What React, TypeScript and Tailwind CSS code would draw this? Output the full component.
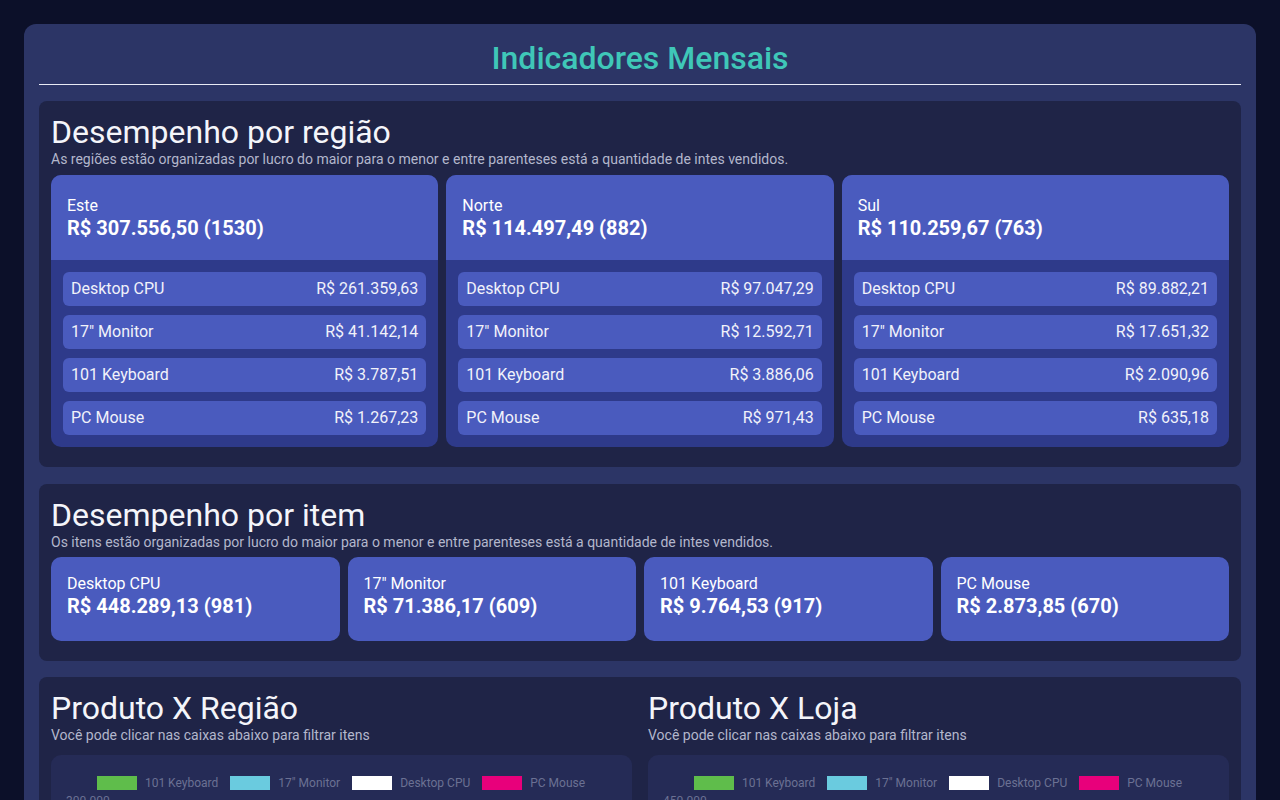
const regions = [
  {
    name: "Este",
    total: "R$ 307.556,50 (1530)",
    items: [
      ["Desktop CPU", "R$ 261.359,63"],
      ['17" Monitor', "R$ 41.142,14"],
      ["101 Keyboard", "R$ 3.787,51"],
      ["PC Mouse", "R$ 1.267,23"],
    ],
  },
  {
    name: "Norte",
    total: "R$ 114.497,49 (882)",
    items: [
      ["Desktop CPU", "R$ 97.047,29"],
      ['17" Monitor', "R$ 12.592,71"],
      ["101 Keyboard", "R$ 3.886,06"],
      ["PC Mouse", "R$ 971,43"],
    ],
  },
  {
    name: "Sul",
    total: "R$ 110.259,67 (763)",
    items: [
      ["Desktop CPU", "R$ 89.882,21"],
      ['17" Monitor', "R$ 17.651,32"],
      ["101 Keyboard", "R$ 2.090,96"],
      ["PC Mouse", "R$ 635,18"],
    ],
  },
];

const items = [
  { name: "Desktop CPU", total: "R$ 448.289,13 (981)" },
  { name: '17" Monitor', total: "R$ 71.386,17 (609)" },
  { name: "101 Keyboard", total: "R$ 9.764,53 (917)" },
  { name: "PC Mouse", total: "R$ 2.873,85 (670)" },
];

const legend = [
  { label: "101 Keyboard", color: "bg-[#5fbd4b]" },
  { label: '17" Monitor', color: "bg-[#6acbdf]" },
  { label: "Desktop CPU", color: "bg-white" },
  { label: "PC Mouse", color: "bg-[#e8007b]" },
];

function SectionHeading({ title, subtitle }: { title: string; subtitle: string }) {
  return (
    <div>
      <h2 className="text-[32px] leading-[38px] font-normal text-[#f4f5fa]">{title}</h2>
      <p className="text-[14px] leading-4 text-[#b3b7cc]">{subtitle}</p>
    </div>
  );
}

function ChartBox({ ticks }: { ticks: string[] }) {
  return (
    <div className="rounded-[10px] bg-[#252b56] pr-4 pl-[15px] pt-[21px] pb-4">
      <div className="flex items-center justify-center gap-3 text-[12px] leading-[14px] text-[#6b7193]">
        {legend.map((l) => (
          <div key={l.label} className="flex items-center gap-2">
            <span className={`h-[14px] w-[40px] ${l.color}`} />
            <span>{l.label}</span>
          </div>
        ))}
      </div>
      <div className="mt-1 flex flex-col">
        {ticks.map((t) => (
          <div key={t} className="flex h-[48px] items-start gap-2">
            <span className="w-[42px] text-right text-[12px] leading-[14px] text-[#6b7193]">{t}</span>
            <span className="mt-[7px] h-px flex-1 bg-[#343b68]" />
          </div>
        ))}
      </div>
    </div>
  );
}

export default function App() {
  return (
    <div className="min-h-screen bg-[#0c1029] px-6 pt-6 pb-6 font-['Roboto',sans-serif]">
      <div className="rounded-xl bg-[#2c3566] px-[15px] pt-[14px] pb-4">
        <h1 className="text-center text-[32px] leading-10 font-medium text-[#3fc7b8]">Indicadores Mensais</h1>
        <div className="mt-[6px] h-px bg-[#e8eaf4]" />

        <section className="mt-4 rounded-lg bg-[#1f2447] px-3 pt-3 pb-5">
          <SectionHeading
            title="Desempenho por região"
            subtitle="As regiões estão organizadas por lucro do maior para o menor e entre parenteses está a quantidade de intes vendidos."
          />
          <div className="mt-2 grid grid-cols-3 gap-2">
            {regions.map((r) => (
              <div key={r.name} className="overflow-hidden rounded-[10px] bg-[#2e3a8a]">
                <div className="bg-[#4a5bbe] px-4 pt-[21px] pb-5 text-white">
                  <div className="text-[16px] leading-5">{r.name}</div>
                  <div className="text-[20px] leading-6 font-bold">{r.total}</div>
                </div>
                <div className="flex flex-col gap-[9px] px-3 pt-3 pb-3">
                  {r.items.map(([n, v]) => (
                    <div
                      key={n}
                      className="flex h-[34px] items-center justify-between rounded-md bg-[#4a5bbe] px-2 text-[16px] text-[#f1f2fa]"
                    >
                      <span>{n}</span>
                      <span>{v}</span>
                    </div>
                  ))}
                </div>
              </div>
            ))}
          </div>
        </section>

        <section className="mt-[17px] rounded-lg bg-[#1f2447] px-3 pt-3 pb-5">
          <SectionHeading
            title="Desempenho por item"
            subtitle="Os itens estão organizadas por lucro do maior para o menor e entre parenteses está a quantidade de intes vendidos."
          />
          <div className="mt-[7px] grid grid-cols-4 gap-2">
            {items.map((i) => (
              <div key={i.name} className="h-[84px] rounded-[10px] bg-[#4a5bbe] px-4 pt-[17px] text-white">
                <div className="text-[16px] leading-5">{i.name}</div>
                <div className="text-[20px] leading-6 font-bold">{i.total}</div>
              </div>
            ))}
          </div>
        </section>

        <section className="mt-4 grid grid-cols-2 gap-4 rounded-lg bg-[#1f2447] px-3 pt-3 pb-5">
          <div>
            <SectionHeading title="Produto X Região" subtitle="Você pode clicar nas caixas abaixo para filtrar itens" />
            <div className="mt-3">
              <ChartBox ticks={["300.000", "250.000", "200.000", "150.000", "100.000", "50.000", "0"]} />
            </div>
          </div>
          <div>
            <SectionHeading title="Produto X Loja" subtitle="Você pode clicar nas caixas abaixo para filtrar itens" />
            <div className="mt-3">
              <ChartBox ticks={["450.000", "400.000", "350.000", "300.000", "250.000", "200.000", "150.000", "100.000", "50.000", "0"]} />
            </div>
          </div>
        </section>
      </div>
    </div>
  );
}
